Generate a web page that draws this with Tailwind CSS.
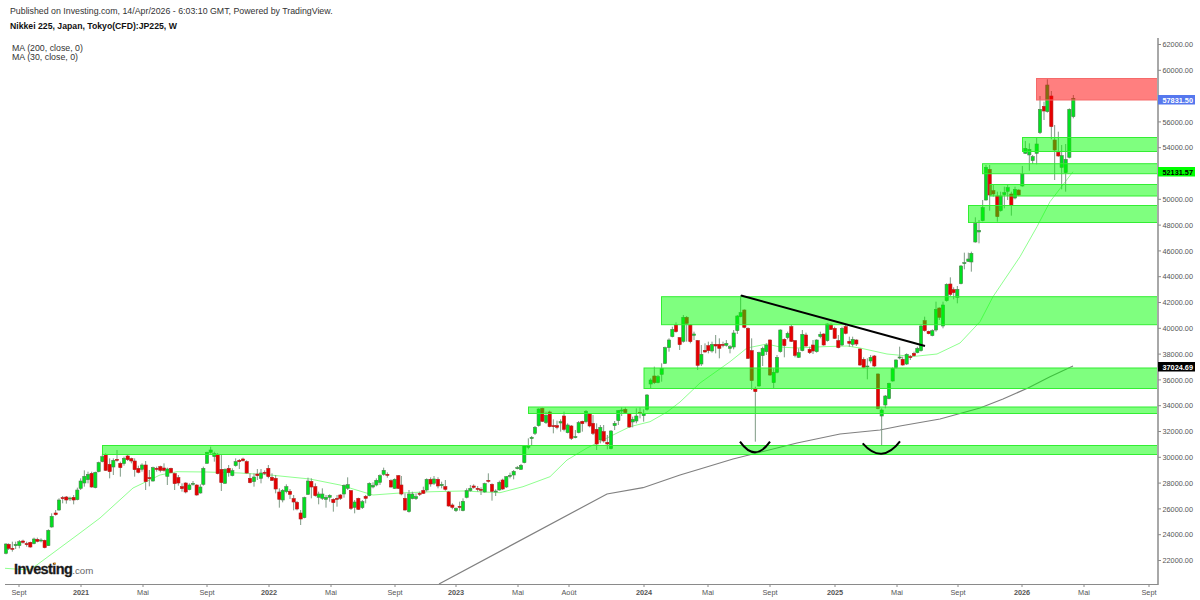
<!DOCTYPE html>
<html lang="fr">
  <head>
    <meta charset="UTF-8" />
    <title>Nikkei 225, Japan, Tokyo(CFD):JP225, W</title>
    <script src="https://cdn.jsdelivr.net/npm/@tailwindcss/browser@4"></script>
  </head>
  <body class="bg-white overflow-hidden font-['Liberation_Sans',Arial,sans-serif]">
    <div class="relative w-[1200px] h-[600px] overflow-hidden">
      <!-- legend -->
      <div class="relative z-10 pl-[10px] pt-[6px]">
        <p class="text-[8.8px] leading-[11px] text-[#333]">Published on Investing.com, 14/Apr/2026 - 6:03:10 GMT, Powered by TradingView.</p>
        <p class="mt-[4px] text-[8.7px] leading-[11px] font-bold text-[#111]">Nikkei 225, Japan, Tokyo(CFD):JP225, W</p>
        <div class="mt-[12px] ml-[2px] text-[8.8px] leading-[8.6px] text-[#333]">
          <p>MA (200, close, 0)</p>
          <p>MA (30, close, 0)</p>
        </div>
      </div>

      <!-- chart -->
      <svg id="chart" class="absolute inset-0" width="1200" height="600" viewBox="0 0 1200 600" xmlns="http://www.w3.org/2000/svg">
        <g id="ma" fill="none">
          <polyline stroke="#8fff8f" stroke-width="1" points="5,568.3 30,570 53,553 80,533 100,518 133,488 160,475 177,471.7 207,472 240,473 270,475 310,479 340,485 373,495 400,493 433,491.7 463,491 500,492.7 523,486.7 550,476.7 567,460 587,448 613,435 630,426.7 650,421.7 667,412 680,402 700,383 730,361.7 747,348 767,344 780,347 797,348 823,346.7 847,346 860,348 887,354 913,356.5 937,354 960,343 980,321.7 993,296.7 1020,256.7 1037,226.7 1050,201.7 1073,171.7" />
          <polyline stroke="#808080" stroke-width="1.2" points="439,584 607,494 643,487.7 680,475 700,469 733,459 797,443 840,434 880,430 900,426 940,419 980,408 1003,399 1028,388 1050,376.7 1073,366" />
        </g>
        <g id="candles"></g>

        <!-- zones -->
        <g stroke-width="1">
          <rect x="102.5" y="445.5" width="1055" height="9" fill="#00ff00" fill-opacity="0.5" stroke="#33ee33" />
          <rect x="528.5" y="407" width="629" height="6.5" fill="#00ff00" fill-opacity="0.5" stroke="#33ee33" />
          <rect x="644" y="368" width="513.5" height="20.5" fill="#00ff00" fill-opacity="0.5" stroke="#33ee33" />
          <rect x="661.5" y="296.7" width="496" height="28" fill="#00ff00" fill-opacity="0.5" stroke="#33ee33" />
          <rect x="968.5" y="205.5" width="189" height="17" fill="#00ff00" fill-opacity="0.5" stroke="#33ee33" />
          <rect x="990" y="184.5" width="167.5" height="11.5" fill="#00ff00" fill-opacity="0.5" stroke="#33ee33" />
          <rect x="982.5" y="163.7" width="175" height="10" fill="#00ff00" fill-opacity="0.5" stroke="#33ee33" />
          <rect x="1022.5" y="137.5" width="135" height="14" fill="#00ff00" fill-opacity="0.5" stroke="#33ee33" />
          <rect x="1036.5" y="78.5" width="121" height="21.5" fill="#ff0000" fill-opacity="0.5" stroke="#f56a6a" />
        </g>

        <!-- drawings -->
        <g fill="none" stroke="#000" stroke-width="2">
          <line x1="741" y1="295.5" x2="925" y2="346" />
          <path d="M740 441.7 Q755 463 770 441.7" />
          <path d="M862.7 443.3 Q881.7 465 900 441.3" />
        </g>

        <!-- axes -->
        <line x1="1158" y1="38" x2="1158" y2="585" stroke="#a8a8a8" stroke-width="2" />
        <line x1="5" y1="584.5" x2="1158" y2="584.5" stroke="#8a8a8a" stroke-width="1" />
        <g id="prices"></g>
        <g id="times"></g>

        <!-- price flags -->
        <rect x="1158" y="95" width="37" height="9.5" fill="#5577ee" />
        <text x="1162.5" y="102.5" class="fill-white text-[7.3px] font-bold">57831.50</text>
        <rect x="1158" y="167" width="37" height="9.5" fill="#00ff00" />
        <text x="1162.5" y="174.5" class="fill-black text-[7.3px] font-bold">52131.57</text>
        <rect x="1158" y="362" width="37" height="9.5" fill="#000" />
        <text x="1162.5" y="369.5" class="fill-white text-[7.3px] font-bold">37024.69</text>

        <!-- logo -->
        <text x="14" y="573.5" class="fill-[#1a1a1a] stroke-[#1a1a1a] stroke-[0.3px] text-[14.5px] font-bold tracking-[-0.6px]">Investing<tspan class="fill-[#666] stroke-none text-[9.7px] font-normal tracking-normal">.com</tspan></text>
        <circle cx="55" cy="563.5" r="1" fill="#f29b20" />
      </svg>
    </div>

    <script>
      // candles read off the picture: [x, colour, wick top, body top, body bottom, wick bottom]
      const segments = [
        [0, 445, [
          [18,'g',295,297,325,328],[26,'r',295,298,310,315],[37,'r',290,310,312,320],[47,'g',290,298,302,312],[58,'g',285,290,302,310],[69,'r',284,288,292,296],[80,'r',290,296,298,305],[91,'r',290,292,306,308],[102,'g',278,282,296,298],[112,'r',278,283,289,292],[123,'g',280,285,286,292],[134,'r',284,286,308,310],[145,'g',253,256,302,303],[155,'g',205,214,246,248],[167,'r',195,204,209,212],[177,'g',160,165,195,197],[188,'r',153,158,160,175],[199,'r',153,156,165,176],[210,'g',155,159,161,168],[221,'r',150,157,165,178],[232,'g',128,135,164,166],[242,'g',100,108,130,135],[253,'g',76,94,114,125],[264,'g',80,88,104,115],[275,'r',80,85,126,128],[286,'g',80,82,128,130],[296,'g',50,53,80,82],[307,'g',28,35,50,52],[317,'r',25,28,76,78],[329,'r',40,58,80,100],[340,'g',40,46,66,90],[351,'r',15,43,45,50],[361,'r',50,55,68,95],[372,'g',35,40,56,62],[383,'r',28,33,44,48],[394,'r',38,41,48,55],[404,'r',40,48,74,95],[415,'r',62,70,82,85],[426,'g',55,60,73,80],[437,'r',48,60,110,135],[448,'r',75,98,100,124],[459,'g',65,68,108,110],[470,'r',65,70,72,80],[481,'r',62,65,76,82],[492,'r',55,69,76,80],[502,'g',68,72,94,120],[513,'r',68,70,83,85],[524,'r',83,86,116,135],[535,'r',90,98,114,122],[546,'r',115,125,131,140],[557,'r',112,114,141,145],[568,'g',115,120,134,136],[579,'g',108,115,118,122],[590,'r',118,120,150,152]
        ]],
        [200, 445, [
          [1,'g',118,126,144,146],[10,'g',65,70,118,122],[21,'g',20,22,55,56],[32,'g',5,15,22,26],[43,'g',20,26,35,50],[53,'r',24,28,86,88],[64,'r',28,73,113,138],[75,'g',70,73,115,116],[86,'r',60,70,83,95],[97,'g',70,77,92,94],[107,'g',40,50,62,65],[118,'r',42,46,50,72],[129,'r',38,42,47,50],[140,'r',46,50,84,86],[150,'r',85,100,113,115],[162,'g',85,96,110,125],[172,'r',72,87,92,105],[183,'g',72,84,100,115],[194,'r',76,82,84,90],[205,'r',60,70,95,100],[216,'r',85,97,106,108],[227,'r',90,100,132,145],[238,'r',130,141,163,188],[248,'g',132,136,165,172],[259,'g',118,125,140,145],[270,'r',132,139,148,162],[281,'r',150,161,171,196],[291,'r',168,172,192,196],[302,'r',195,204,222,240],[313,'g',155,158,218,220],[324,'g',98,108,148,150],[334,'r',100,109,126,160],[346,'r',115,125,152,155],[356,'g',140,147,157,178],[367,'g',130,147,160,165],[378,'g',150,157,163,188],[389,'g',148,151,157,170],[400,'r',160,163,173,200],[411,'r',150,160,161,185],[421,'r',147,150,160,165],[432,'g',118,121,147,158],[443,'g',97,119,130,135],[453,'r',135,137,190,195],[464,'g',165,171,187,205],[475,'r',158,160,193,195],[487,'g',165,170,188,192],[497,'r',150,154,160,175],[508,'g',112,115,152,154],[519,'g',112,121,126,130],[529,'g',100,106,120,124],[540,'g',88,92,112,120],[551,'g',68,76,88,92],[562,'r',82,88,89,98],[573,'r',103,107,126,128],[584,'g',100,103,130,132],[595,'r',90,92,130,132]
        ]],
        [400, 390, [
          [4,'r',258,285,312,316],[15,'r',310,325,360,362],[27,'g',300,312,365,368],[37,'g',305,312,326,328],[48,'g',310,320,326,330],[59,'r',305,310,313,318],[70,'r',290,301,310,312],[80,'g',265,268,300,305],[92,'r',262,268,282,290],[102,'g',258,267,280,285],[114,'r',262,268,288,295],[125,'g',275,283,287,295],[136,'r',270,290,298,302],[146,'r',303,306,348,350],[157,'r',340,345,352,358],[168,'g',352,355,362,366],[179,'r',335,349,350,362],[189,'g',325,334,362,364],[200,'g',295,302,322,325],[211,'g',285,295,302,305],[221,'r',283,288,292,296],[233,'r',288,295,297,305],[243,'r',292,298,300,315],[254,'g',278,281,306,308],[265,'r',250,271,273,278],[276,'r',280,283,304,332],[287,'g',298,303,306,318],[298,'g',272,277,300,302],[308,'r',266,270,297,300],[319,'g',258,260,291,294],[330,'g',248,256,258,265],[341,'g',240,244,255,268],[352,'g',228,233,236,238],[363,'g',222,226,238,240],[373,'g',165,168,218,220],[385,'g',145,168,172,178],[395,'g',138,142,146,165],[405,'g',108,112,130,135],[416,'g',55,57,107,110],[427,'r',53,55,94,96],[438,'g',65,76,98,102],[449,'r',62,66,110,112],[460,'r',88,107,109,130],[471,'r',92,107,112,118],[482,'g',88,95,99,125],[492,'r',65,78,118,124],[503,'g',100,105,128,130],[514,'r',105,108,145,150],[526,'g',120,140,142,145],[536,'g',93,98,128,130],[547,'r',92,94,101,125],[558,'g',60,64,95,100],[569,'r',70,72,108,112],[579,'r',75,100,130,135],[590,'r',100,118,162,180],[601,'g',105,112,150,160],[611,'r',105,125,153,158],[622,'r',135,157,162,178],[633,'g',120,123,176,178],[644,'g',93,100,107,120],[655,'g',60,62,92,105],[665,'g',52,60,62,78],[676,'r',52,58,68,72],[688,'r',70,72,111,113],[698,'g',80,88,96,112],[709,'g',55,78,93,100],[720,'r',52,68,69,85],[731,'g',58,70,77,95]
        ]],
        [640, 290, [
          [21,'g',312,315,358,362],[32,'g',265,270,282,296],[43,'r',230,258,278,282],[54,'g',255,260,278,280],[65,'g',220,235,253,275],[75,'g',170,173,220,222],[87,'g',145,150,173,185],[97,'g',110,118,140,142],[108,'r',97,105,125,128],[119,'r',142,143,164,180],[130,'g',75,82,154,158],[140,'r',78,82,100,155],[151,'r',102,105,155,160],[162,'g',125,132,136,150],[173,'r',150,152,226,240],[184,'g',165,193,222,228],[195,'r',160,181,186,188],[205,'r',155,167,182,190],[216,'g',155,163,183,188],[227,'r',135,163,168,190],[238,'r',145,163,175,205],[249,'r',155,163,165,172],[259,'g',150,160,166,170],[270,'g',165,170,175,190],[281,'g',120,129,171,178],[292,'g',75,78,122,132],[302,'g',15,68,80,82],[313,'r',58,60,112,115],[324,'r',112,115,205,207],[335,'r',145,182,272,300]
        ]],
        [640, 280, [
          [346,'r',320,327,335,485],[357,'g',215,218,318,320],[368,'g',200,205,227,258],[379,'g',190,195,215,225],[390,'r',178,180,285,288],[401,'g',265,277,308,325],[411,'g',225,232,277,280],[421,'g',148,150,215,218],[433,'r',175,178,197,232],[443,'g',155,160,173,178],[454,'r',135,140,184,186],[465,'r',180,182,226,232],[476,'g',205,218,232,234],[487,'g',150,163,212,214],[498,'r',158,165,198,200],[509,'r',200,208,218,222],[519,'r',180,195,213,222],[530,'g',178,180,215,218],[541,'g',155,163,170,175],[551,'r',160,162,195,197],[562,'g',130,132,182,185],[573,'r',130,135,148,150],[584,'r',140,145,175,177],[595,'r',165,182,203,205],[606,'g',140,145,195,198],[617,'r',135,140,160,163],[628,'r',170,184,190,200],[638,'g',170,178,193,200],[649,'r',178,180,192,198],[660,'r',205,207,255,258],[671,'r',232,238,262,265],[682,'g',235,258,260,298],[692,'g',225,232,243,250],[703,'r',225,228,258,262],[714,'r',280,282,385,388],[725,'g',385,390,408,495],[736,'g',345,348,375,385],[747,'g',308,310,356,358],[758,'g',262,265,303,305],[768,'g',238,240,263,266],[779,'g',200,231,233,238]
        ]],
        [900, 200, [
          [8,'r',470,478,495,497],[20,'g',460,463,492,495],[31,'r',465,470,472,480],[42,'r',455,460,467,470],[52,'g',440,445,458,460],[63,'g',375,378,452,455],[74,'r',350,362,392,395],[86,'r',392,394,401,403],[97,'g',388,392,407,409],[108,'g',305,328,390,395],[118,'r',322,324,352,360],[129,'g',305,315,378,385],[140,'g',250,253,302,305],[151,'r',232,252,283,288],[161,'r',262,269,278,298],[172,'g',258,268,292,310],[183,'g',195,198,251,253],[193,'g',158,188,190,208],[205,'g',158,177,184,186],[214,'g',155,160,186,215],[226,'g',52,70,126,128],[237,'g',60,91,96,130]
        ]],
        [900, 30, [
          [248,'g',510,533,572,574],[258,'g',405,412,510,512],[269,'r',405,418,495,542],[280,'r',465,482,492,500],[292,'r',485,498,560,575],[302,'g',485,498,542,545],[313,'g',470,488,494,535],[323,'g',465,473,484,510],[334,'r',485,492,525,557],[345,'g',470,478,504,508],[356,'r',478,480,495,497],[367,'g',408,432,468,470],[376,'g',333,355,370,372],[388,'g',340,358,375,422],[398,'g',375,380,392,402],[410,'g',322,342,370,403],[420,'g',198,238,308,312],[432,'r',215,229,243,270],[442,'g',148,165,245,248],[454,'r',183,198,290,328],[464,'r',285,330,360,450],[475,'r',305,367,378,380],[485,'g',345,377,412,478],[497,'g',342,388,428,485],[508,'g',235,238,382,385],[520,'g',195,205,260,265]
        ]]
      ];

      const NS = 'http://www.w3.org/2000/svg';
      const el = (parent, tag, attrs, text) => {
        const node = document.createElementNS(NS, tag);
        Object.entries(attrs).forEach(([k, v]) => node.setAttribute(k, v));
        if (text) node.textContent = text;
        parent.appendChild(node);
      };

      const candles = document.getElementById('candles');
      segments.forEach(([ox, oy, rows]) => {
        rows.forEach(([zx, c, wt, bt, bb, wb]) => {
          const x = ox + zx / 3;
          const y = (v) => oy + v / 3;
          el(candles, 'line', { x1: x, x2: x, y1: y(wt), y2: y(wb), stroke: '#7f9a85', 'stroke-width': 1 });
          el(candles, 'rect', {
            x: x - 1.6, y: y(bt), width: 3.2, height: Math.max(y(bb) - y(bt), 1),
            fill: c === 'g' ? '#00e020' : '#e60000',
            stroke: c === 'g' ? '#4f7f4f' : '#b02020', 'stroke-width': 0.6
          });
        });
      });

      const prices = document.getElementById('prices');
      for (let p = 62000; p >= 22000; p -= 2000) {
        const y = 44.5 + (62000 - p) / 2000 * 25.8;
        el(prices, 'line', { x1: 1158, x2: 1161, y1: y, y2: y, stroke: '#8a8a8a', 'stroke-width': 1 });
        // 58000 and 52000 sit under the price flags
        if (p === 58000 || p === 52000) continue;
        el(prices, 'text', { x: 1162.5, y: y + 2.6, class: 'fill-[#555] text-[7.3px]' }, p + '.00');
      }

      const times = document.getElementById('times');
      [['Sept',19],['2021',81,1],['Mai',143],['Sept',207],['2022',269,1],['Mai',331],['Sept',395],['2023',456,1],['Mai',518],['Août',569],['2024',644,1],['Mai',708],['Sept',770],['2025',835,1],['Mai',897],['Sept',958],['2026',1022,1],['Mai',1084],['Sept',1149]].forEach(([t, x, year]) => {
        el(times, 'line', { x1: x, x2: x, y1: 584, y2: 587, stroke: '#8a8a8a', 'stroke-width': 1 });
        el(times, 'text', { x, y: 595, 'text-anchor': 'middle', class: year ? 'fill-[#555] text-[7.3px] font-bold' : 'fill-[#555] text-[7.3px]' }, t);
      });
    </script>
  </body>
</html>
